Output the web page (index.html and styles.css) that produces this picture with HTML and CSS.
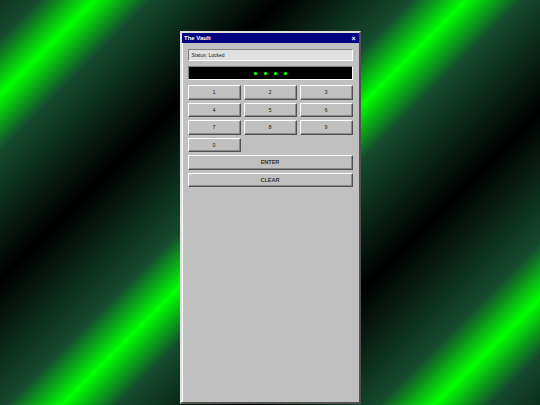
FILE: index.html
```html
<!DOCTYPE html>
<html lang="en">
<head>
    <meta charset="UTF-8">
    <meta name="viewport" content="width=device-width, initial-scale=1.0">
    <title>The Vault</title>
    <link rel="stylesheet" href="styles.css">
</head>
<body>
    <div class="vault">
        <div class="titlebar">
            <span class="title">The Vault</span>
            <span class="close">&times;</span>
        </div>
        <div class="vault-body">
            <div class="status" id="status">Status: Locked</div>
            <div class="display" id="display">
                <span class="dot"></span>
                <span class="dot"></span>
                <span class="dot"></span>
                <span class="dot"></span>
            </div>
            <div class="keypad">
                <button class="key">1</button>
                <button class="key">2</button>
                <button class="key">3</button>
                <button class="key">4</button>
                <button class="key">5</button>
                <button class="key">6</button>
                <button class="key">7</button>
                <button class="key">8</button>
                <button class="key">9</button>
                <button class="key">0</button>
                <button class="key wide">ENTER</button>
                <button class="key wide">CLEAR</button>
            </div>
        </div>
    </div>
</body>
</html>
```

FILE: styles.css
```css
html, body { margin: 0; padding: 0; }
body { min-height: 100vh; font-family: "Liberation Sans", Arial, sans-serif; background: repeating-linear-gradient(135deg, #000 -65px, #154a2f 28px, #00ff00 67px, #154a2f 106px, #000 198px); overflow: hidden; }

/* window frame */
.vault { box-sizing: border-box; width: 181px; height: 373px; margin: 31px auto 0; background: #c0c0c0; border: 2px solid; border-color: #dfdfdf #505050 #505050 #dfdfdf; box-shadow: inset 1px 1px 0 #fff; }
.titlebar { display: flex; justify-content: space-between; align-items: center; height: 10px; padding: 0 3px 0 2.5px; background: #000080; color: #fff; font-size: 6px; font-weight: bold; }
.close { font-size: 7px; line-height: 1; }

.vault-body { display: flex; flex-direction: column; gap: 5px; padding: 6px 6px 0; }

.status { box-sizing: border-box; height: 12px; padding: 0 3px; display: flex; align-items: center; background: #e0e0e0; color: #222; font-size: 5px; border: 1px solid; border-color: #808080 #fff #fff #808080; }

.display { box-sizing: border-box; height: 14px; display: flex; justify-content: center; align-items: center; gap: 7px; background: #000; border: 1px solid; border-color: #808080 #fff #fff #808080; }
.dot { width: 3px; height: 3px; border-radius: 50%; background: #00ff00; box-shadow: 0 0 1px #0c0; }

.keypad { display: grid; grid-template-columns: repeat(3, 1fr); grid-auto-rows: 14.5px; gap: 3px; }
.key { box-sizing: border-box; margin: 0; padding: 0; font-family: inherit; font-size: 5.5px; color: #222; background: #c0c0c0; border: 1px solid; border-color: #fff #505050 #505050 #fff; box-shadow: inset -1px -1px 0 #8a8a8a; cursor: pointer; }
.key:active { border-color: #505050 #fff #fff #505050; box-shadow: none; }
.key.wide { grid-column: 1 / -1; font-weight: bold; color: #333; }
```
